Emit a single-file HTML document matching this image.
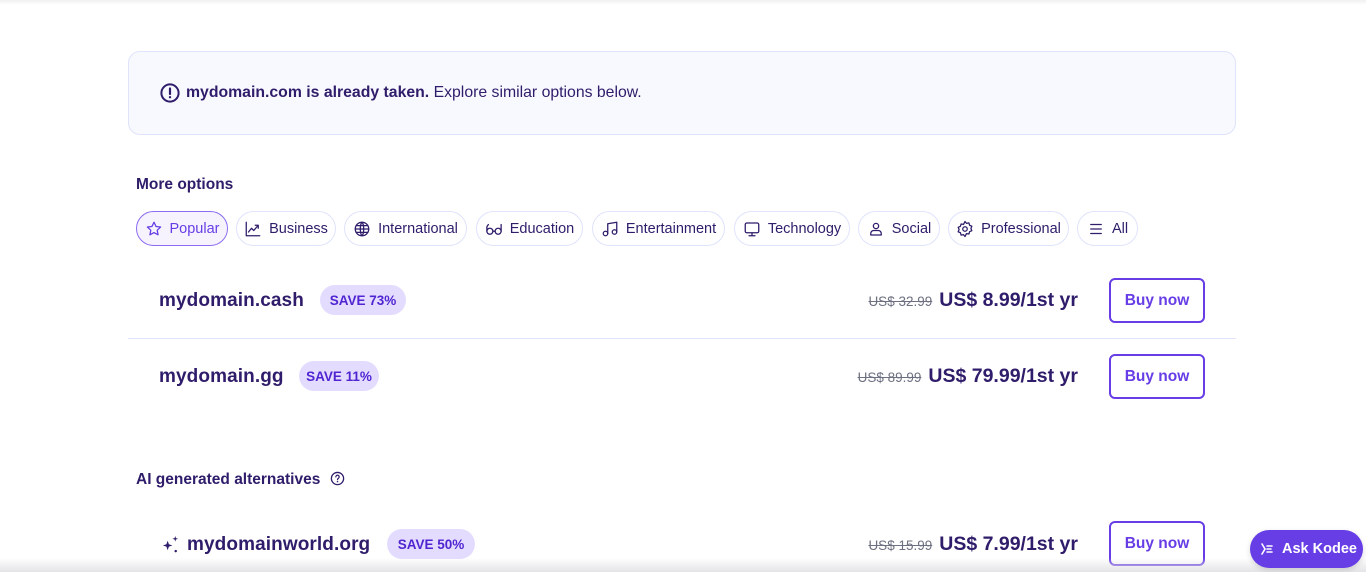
<!DOCTYPE html>
<html><head><meta charset="utf-8"><style>
*{box-sizing:border-box;margin:0;padding:0}
body{width:1366px;height:572px;overflow:hidden;background:#fff;font-family:"Liberation Sans",sans-serif;color:#2f1c6a;position:relative}
.a{position:absolute}
.banner{left:128px;top:51px;width:1108px;height:84px;border:1px solid #dfe3fb;border-radius:12px;background:#f8f9ff}
.chip{position:absolute;top:211px;height:35px;border:1px solid #dfe3fb;border-radius:18px;display:flex;align-items:center;justify-content:center;font-size:14.5px;color:#2f1c6a;gap:7px}
.chip svg{width:18px;height:18px;fill:none;stroke:#2f1c6a;stroke-width:1.7;stroke-linecap:round;stroke-linejoin:round}
.chip.on{border:1.5px solid #8c6cf0;background:#f6f3ff;color:#673de6}
.chip.on svg{stroke:#673de6}
.dom{font-size:19px;font-weight:bold;letter-spacing:0.1px}
.save{height:30px;border-radius:15px;background:#e3dcff;color:#5025d1;font-weight:bold;font-size:13.5px;display:flex;align-items:center;justify-content:center}
.pr{position:absolute;right:288px;display:flex;align-items:baseline;gap:7px;white-space:nowrap}
.old{font-size:13.5px;color:#6d7081;text-decoration:line-through}
.price{font-size:19.5px;font-weight:bold}
.buy{left:1109px;width:96px;height:45px;border:2px solid #673de6;border-radius:6px;color:#673de6;font-weight:bold;font-size:15.5px;display:flex;align-items:center;justify-content:center;background:#fff}
</style></head><body>
<div class="a" style="left:0;top:0;width:1366px;height:5px;background:linear-gradient(#f1f1f3,#fff)"></div>
<div class="a banner"></div>
<svg class="a" style="left:160px;top:83px" width="20" height="20" viewBox="0 0 20 20"><circle cx="10" cy="10" r="8.6" fill="none" stroke="#2f1c6a" stroke-width="2"/><path d="M10 5.5v5.5" stroke="#2f1c6a" stroke-width="2.2" stroke-linecap="round"/><circle cx="10" cy="14.2" r="1.2" fill="#2f1c6a"/></svg>
<div class="a" style="left:186px;top:84px;font-size:15.8px;white-space:nowrap"><b>mydomain.com is already taken.</b> Explore similar options below.</div>
<div class="a" style="left:136px;top:176px;font-size:15.5px;font-weight:bold">More options</div>

<div class="chip on" style="left:136px;width:92px"><svg viewBox="0 0 24 24"><path d="M12 3l2.7 5.6 6.1.8-4.5 4.2 1.1 6.1L12 16.8l-5.4 2.9 1.1-6.1-4.5-4.2 6.1-.8z"/></svg>Popular</div>
<div class="chip" style="left:236px;width:100px"><svg viewBox="0 0 24 24"><path d="M3 3v18h18M6 16l4-5 3 3 6-7M15 7h4v4"/></svg>Business</div>
<div class="chip" style="left:344px;width:123px"><svg viewBox="0 0 24 24"><circle cx="12" cy="12" r="9"/><path d="M3 12h18M12 3c3 3 3 15 0 18M12 3c-3 3-3 15 0 18M4.5 7.5h15M4.5 16.5h15"/></svg>International</div>
<div class="chip" style="left:476px;width:107px"><svg viewBox="0 0 24 24"><circle cx="6.5" cy="15" r="4"/><circle cx="17.5" cy="15" r="4"/><path d="M10.5 15h3M2.5 15V9l2-3M21.5 15V6"/></svg>Education</div>
<div class="chip" style="left:592px;width:133px"><svg viewBox="0 0 24 24"><circle cx="6" cy="18" r="3"/><circle cx="18" cy="16" r="3"/><path d="M9 18V5l12-2v13"/></svg>Entertainment</div>
<div class="chip" style="left:734px;width:116px"><svg viewBox="0 0 24 24"><rect x="3" y="4" width="18" height="13" rx="2"/><path d="M8 21h8M12 17v4"/></svg>Technology</div>
<div class="chip" style="left:858px;width:82px"><svg viewBox="0 0 24 24"><circle cx="12" cy="8" r="3.5"/><path d="M5 20v-2a4 4 0 014-4h6a4 4 0 014 4v2z"/></svg>Social</div>
<div class="chip" style="left:948px;width:121px"><svg viewBox="0 0 24 24"><circle cx="12" cy="12" r="3"/><path d="M12 2l2 2.5 3.2-.6.9 3.1 3 1.3-1.2 3 1.2 3-3 1.3-.9 3.1-3.2-.6L12 22l-2-2.5-3.2.6-.9-3.1-3-1.3 1.2-3-1.2-3 3-1.3.9-3.1 3.2.6z"/></svg>Professional</div>
<div class="chip" style="left:1077px;width:61px"><svg viewBox="0 0 24 24"><path d="M5 6h14M5 12h14M5 18h14"/></svg>All</div>

<div class="a dom" style="left:159px;top:290px">mydomain.cash</div>
<div class="a save" style="left:320px;top:285px;width:86px">SAVE 73%</div>
<div class="pr" style="top:289px"><span class="old">US$ 32.99</span><span class="price">US$ 8.99/1st yr</span></div>
<div class="a buy" style="top:278px">Buy now</div>
<div class="a" style="left:128px;top:338px;width:1108px;height:1px;background:#dfe3fb"></div>

<div class="a dom" style="left:159px;top:366px">mydomain.gg</div>
<div class="a save" style="left:299px;top:361px;width:80px">SAVE 11%</div>
<div class="pr" style="top:365px"><span class="old">US$ 89.99</span><span class="price">US$ 79.99/1st yr</span></div>
<div class="a buy" style="top:354px">Buy now</div>

<div class="a" style="left:136px;top:471px;font-size:15.5px;font-weight:bold">AI generated alternatives</div>
<svg class="a" style="left:330px;top:471px" width="15" height="15" viewBox="0 0 16 16"><circle cx="8" cy="8" r="6.5" fill="none" stroke="#2f1c6a" stroke-width="1.4"/><path d="M6.2 6.3a1.8 1.8 0 113 1.3c-.7.5-1.2.8-1.2 1.6" fill="none" stroke="#2f1c6a" stroke-width="1.3" stroke-linecap="round"/><circle cx="8" cy="11.3" r=".8" fill="#2f1c6a"/></svg>
<svg class="a" style="left:161px;top:535px" width="19" height="19" viewBox="0 0 20 20" fill="#2f1c6a"><path d="M7 6l1.3 3.7L12 11l-3.7 1.3L7 16l-1.3-3.7L2 11l3.7-1.3z"/><path d="M15 1l.7 2.3L18 4l-2.3.7L15 7l-.7-2.3L12 4l2.3-.7z"/><circle cx="15.5" cy="17" r="1.3"/></svg>
<div class="a dom" style="left:187px;top:534px">mydomainworld.org</div>
<div class="a save" style="left:387px;top:529px;width:88px">SAVE 50%</div>
<div class="pr" style="top:533px"><span class="old">US$ 15.99</span><span class="price">US$ 7.99/1st yr</span></div>
<div class="a buy" style="top:521px">Buy now</div>

<div class="a" style="left:0;top:558px;width:1366px;height:14px;background:linear-gradient(rgba(255,255,255,0),rgba(225,225,228,.9))"></div>
<div class="a" style="left:1250px;top:530px;width:113px;height:38px;border-radius:19px;background:#673de6;color:#fff;font-weight:bold;font-size:14.5px;display:flex;align-items:center;padding-left:10px;gap:8px;box-shadow:0 2px 6px rgba(0,0,0,.15)">
<svg width="14" height="14" viewBox="0 0 14 14" fill="none" stroke="#fff" stroke-width="1.6" stroke-linecap="round"><path d="M2 2l3 5-3 5M7 4h5M7 7h4M7 10h5"/></svg>Ask Kodee</div>
</body></html>
